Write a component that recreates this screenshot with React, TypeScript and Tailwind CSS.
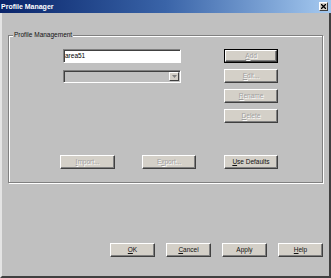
import React from "react";

type BtnProps = {
  label: string;
  u?: number;
  w: string;
  disabled?: boolean;
  isDefault?: boolean;
};

function Label({ label, u }: { label: string; u?: number }) {
  if (u === undefined) return <>{label}</>;
  return (
    <>
      {label.slice(0, u)}
      <span className="underline">{label[u]}</span>
      {label.slice(u + 1)}
    </>
  );
}

function Btn({ label, u, w, disabled, isDefault }: BtnProps) {
  const face = (
    <div
      className={`flex h-full w-full items-center justify-center border border-t-white border-l-white border-r-[#404040] border-b-[#404040] bg-[#d4d0c8] shadow-[inset_-1px_-1px_0_#808080] ${
        disabled ? "text-[#a0a0a0] [text-shadow:1px_1px_0_#ffffff]" : "text-[#111]"
      }`}
    >
      <Label label={label} u={u} />
    </div>
  );
  if (isDefault) {
    return <div className={`${w} h-[14px] shrink-0 border border-black`}>{face}</div>;
  }
  return <div className={`${w} h-[14px] shrink-0`}>{face}</div>;
}

export default function App() {
  return (
    <div
      className="flex h-[278px] w-[331px] flex-col overflow-hidden bg-[#c0c0c0] text-[6.5px] leading-none"
      style={{ fontFamily: '"Liberation Sans", Arial, sans-serif' }}
    >
      {/* Title bar */}
      <div className="flex h-[13px] shrink-0 items-center justify-between bg-gradient-to-r from-[#0a246a] via-[#3a64a8] to-[#a6caf0] pl-[1px] pr-[3px]">
        <span className="text-[7px] font-bold text-white">Profile Manager</span>
        <div className="flex h-[9px] w-[9px] items-center justify-center border border-t-white border-l-white border-r-[#404040] border-b-[#404040] bg-[#d4d0c8]">
          <svg width="5" height="5" viewBox="0 0 5 5">
            <path d="M0 0L5 5M5 0L0 5" stroke="#000" strokeWidth="1.3" />
          </svg>
        </div>
      </div>

      {/* Body */}
      <div className="flex flex-1 flex-col border-l-2 border-r-2 border-b-2 border-l-[#e4e4e4] border-r-[#404040] border-b-[#404040] px-[6px] pt-[22px]">
        {/* Group box */}
        <div className="relative h-[148px] border border-[#808080] shadow-[inset_1px_1px_0_#ffffff,1px_1px_0_#ffffff]">
          <span className="absolute left-[4px] top-[-4px] bg-[#c0c0c0] px-[1px] text-[#111]">
            Profile Management
          </span>

          <div className="flex pl-[54px] pt-[13px]">
            <div className="flex w-[118px] flex-col gap-[7px]">
              <div className="flex h-[14px] items-center border border-t-[#808080] border-l-[#808080] border-r-white border-b-white bg-white pl-[1px] shadow-[inset_1px_1px_0_#404040]">
                area51
              </div>
              <div className="flex h-[13px] items-center justify-end border border-t-[#808080] border-l-[#808080] border-r-white border-b-white bg-[#c0c0c0] p-[1px] shadow-[inset_1px_1px_0_#404040]">
                <div className="flex h-full w-[10px] items-center justify-center border border-t-white border-l-white border-r-[#404040] border-b-[#404040] bg-[#d4d0c8]">
                  <svg width="5" height="3" viewBox="0 0 5 3">
                    <path d="M0 0H5L2.5 3Z" fill="#808080" />
                  </svg>
                </div>
              </div>
            </div>
            <div className="ml-[43px] flex flex-col gap-[6px]">
              <Btn label="Add" u={0} w="w-[54px]" disabled isDefault />
              <Btn label="Edit..." u={0} w="w-[54px]" disabled />
              <Btn label="Rename" u={0} w="w-[54px]" disabled />
              <Btn label="Delete" u={0} w="w-[54px]" disabled />
            </div>
          </div>

          <div className="mt-[32px] flex pl-[51px]">
            <Btn label="Import..." u={0} w="w-[55px]" disabled />
            <div className="ml-[27px]">
              <Btn label="Export..." u={1} w="w-[54px]" disabled />
            </div>
            <div className="ml-[28px]">
              <Btn label="Use Defaults" u={0} w="w-[54px]" />
            </div>
          </div>
        </div>

        {/* Dialog buttons */}
        <div className="mt-[60px] flex justify-end gap-[11px]">
          <Btn label="OK" u={0} w="w-[45px]" />
          <Btn label="Cancel" u={0} w="w-[45px]" />
          <Btn label="Apply" w="w-[45px]" />
          <Btn label="Help" u={0} w="w-[45px]" />
        </div>
      </div>
    </div>
  );
}
